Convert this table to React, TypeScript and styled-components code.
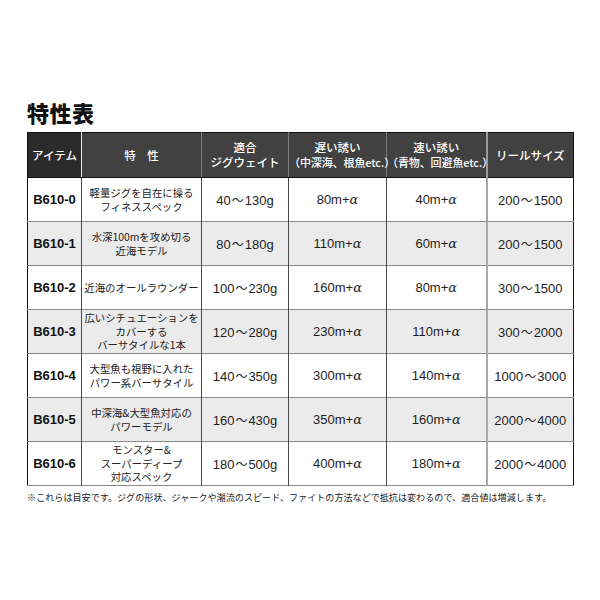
import React from 'react';
import styled, { createGlobalStyle } from 'styled-components';

const GlobalStyle = createGlobalStyle`
  html, body {
    margin: 0;
    padding: 0;
    background: #ffffff;
  }
  body {
    font-family: "Liberation Sans", "Noto Sans CJK JP", sans-serif;
    color: #1a1a1a;
  }
`;

const Page = styled.div`
  width: 600px;
  height: 600px;
  box-sizing: border-box;
  padding: 100px 27px 0 27px;
`;

const Title = styled.h1`
  margin: 0 0 7px 0;
  font-family: "Noto Sans CJK JP", sans-serif;
  font-weight: 900;
  font-size: 22px;
  line-height: 25px;
  color: #111;
  letter-spacing: 0.5px;
`;

const Table = styled.table`
  width: 546px;
  border-collapse: collapse;
  table-layout: fixed;
  border: 1px solid #111;
`;

const HeadCell = styled.th<{ $first?: boolean; $lightSep?: boolean }>`
  height: 44px;
  padding: 0;
  background: ${(p) => (p.$first ? '#2b2b2b' : '#414141')};
  color: #ffffff;
  font-family: "Noto Sans CJK JP", sans-serif;
  font-weight: 500;
  font-size: 11.5px;
  line-height: 15px;
  text-align: center;
  vertical-align: middle;
  border-left: ${(p) =>
    p.$first ? 'none' : p.$lightSep ? '2px solid #9a9a9a' : '1px solid #7a7a7a'};
  border-bottom: 1px solid #111;
  white-space: nowrap;
`;

const HeadCellWhiteSep = styled(HeadCell)`
  border-left: 1px solid #e6e6e6;
`;

const HeadLine = styled.span`
  display: block;
`;

const Sub = styled.span`
  display: block;
  font-size: 11px;
  letter-spacing: -0.1px;
`;

const Row = styled.tr<{ $shade: boolean }>`
  height: 44px;
  background: ${(p) => (p.$shade ? '#ebebeb' : '#ffffff')};
  border-bottom: 1px solid #8a8a8a;
`;

const Cell = styled.td<{ $lightSep?: boolean }>`
  padding: 0;
  text-align: center;
  vertical-align: middle;
  font-size: 13px;
  color: #1e1e1e;
  border-left: ${(p) => (p.$lightSep ? '2px solid #a8a8a8' : '1px solid #4a4a4a')};
`;

const CodeCell = styled(Cell)`
  border-left: none;
  font-weight: 700;
  font-size: 13px;
  color: #111;
`;

const FeatureCell = styled(Cell)`
  font-family: "Noto Sans CJK JP", sans-serif;
  font-size: 10.4px;
  line-height: 14px;
  color: #222;
`;

const FeatureLine = styled.span`
  display: block;
  line-height: 13.6px;
`;

const Tilde = styled.span`
  font-family: "Noto Sans CJK JP", sans-serif;
  font-size: 12px;
  margin: 0 1px;
`;

const Alpha = styled.span`
  font-family: "DejaVu Serif", "Liberation Serif", serif;
  font-style: italic;
  font-size: 13px;
`;

const Note = styled.p`
  margin: 5px 0 0 0;
  font-family: "Noto Sans CJK JP", sans-serif;
  font-size: 9.1px;
  line-height: 12px;
  color: #222;
  white-space: nowrap;
`;

type Spec = {
  code: string;
  feature: string[];
  jig: [string, string];
  slow: string;
  fast: string;
  reel: [string, string];
};

const specs: Spec[] = [
  { code: 'B610-0', feature: ['軽量ジグを自在に操る', 'フィネススペック'], jig: ['40', '130g'], slow: '80m+', fast: '40m+', reel: ['200', '1500'] },
  { code: 'B610-1', feature: ['水深100mを攻め切る', '近海モデル'], jig: ['80', '180g'], slow: '110m+', fast: '60m+', reel: ['200', '1500'] },
  { code: 'B610-2', feature: ['近海のオールラウンダー'], jig: ['100', '230g'], slow: '160m+', fast: '80m+', reel: ['300', '1500'] },
  { code: 'B610-3', feature: ['広いシチュエーションを', 'カバーする', 'バーサタイルな1本'], jig: ['120', '280g'], slow: '230m+', fast: '110m+', reel: ['300', '2000'] },
  { code: 'B610-4', feature: ['大型魚も視野に入れた', 'パワー系バーサタイル'], jig: ['140', '350g'], slow: '300m+', fast: '140m+', reel: ['1000', '3000'] },
  { code: 'B610-5', feature: ['中深海&大型魚対応の', 'パワーモデル'], jig: ['160', '430g'], slow: '350m+', fast: '160m+', reel: ['2000', '4000'] },
  { code: 'B610-6', feature: ['モンスター&', 'スーパーディープ', '対応スペック'], jig: ['180', '500g'], slow: '400m+', fast: '180m+', reel: ['2000', '4000'] },
];

const Range: React.FC<{ v: [string, string] }> = ({ v }) => (
  <>
    {v[0]}
    <Tilde>～</Tilde>
    {v[1]}
  </>
);

const App: React.FC = () => (
  <>
    <GlobalStyle />
    <Page>
      <Title>特性表</Title>
      <Table>
        <colgroup>
          <col style={{ width: 54 }} />
          <col style={{ width: 120 }} />
          <col style={{ width: 87 }} />
          <col style={{ width: 98 }} />
          <col style={{ width: 100 }} />
          <col style={{ width: 87 }} />
        </colgroup>
        <thead>
          <tr>
            <HeadCell $first>アイテム</HeadCell>
            <HeadCellWhiteSep>特　性</HeadCellWhiteSep>
            <HeadCell>
              <HeadLine>適合</HeadLine>
              <HeadLine>ジグウェイト</HeadLine>
            </HeadCell>
            <HeadCell>
              <HeadLine>遅い誘い</HeadLine>
              <Sub>（中深海、根魚etc.）</Sub>
            </HeadCell>
            <HeadCell>
              <HeadLine>速い誘い</HeadLine>
              <Sub>（青物、回避魚etc.）</Sub>
            </HeadCell>
            <HeadCell $lightSep>リールサイズ</HeadCell>
          </tr>
        </thead>
        <tbody>
          {specs.map((s, i) => (
            <Row key={s.code} $shade={i % 2 === 1}>
              <CodeCell>{s.code}</CodeCell>
              <FeatureCell>
                {s.feature.map((line, j) => (
                  <FeatureLine key={j}>{line}</FeatureLine>
                ))}
              </FeatureCell>
              <Cell>
                <Range v={s.jig} />
              </Cell>
              <Cell>
                {s.slow}
                <Alpha>α</Alpha>
              </Cell>
              <Cell>
                {s.fast}
                <Alpha>α</Alpha>
              </Cell>
              <Cell $lightSep>
                <Range v={s.reel} />
              </Cell>
            </Row>
          ))}
        </tbody>
      </Table>
      <Note>
        ※これらは目安です。ジグの形状、ジャークや潮流のスピード、ファイトの方法などで抵抗は変わるので、適合値は増減します。
      </Note>
    </Page>
  </>
);

export default App;
